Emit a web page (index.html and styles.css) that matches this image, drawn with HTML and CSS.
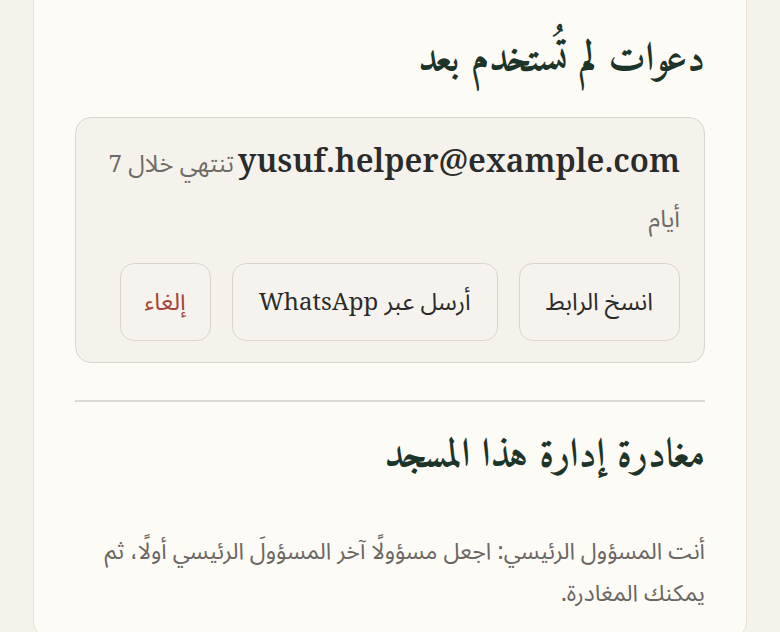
FILE: index.html
```html
<!DOCTYPE html>
<html lang="ar" dir="rtl">
<head>
<meta charset="utf-8">
<link rel="stylesheet" href="styles.css">
</head>
<body>
<div class="card">
  <h2 class="title">دعوات لم تُستخدم بعد</h2>
  <div class="invite">
    <div class="invite-info">
      <span class="email">yusuf.helper@example.com</span>
      <span class="expiry">تنتهي خلال 7 أيام</span>
    </div>
    <div class="actions">
      <button class="btn">انسخ الرابط</button>
      <button class="btn">أرسل عبر WhatsApp</button>
      <button class="btn danger">إلغاء</button>
    </div>
  </div>
  <hr class="divider">
  <h2 class="title leave">مغادرة إدارة هذا المسجد</h2>
  <p class="note">أنت المسؤول الرئيسي: اجعل مسؤولًا آخر المسؤولَ الرئيسي أولًا، ثم يمكنك المغادرة.</p>
</div>
</body>
</html>
```
FILE: styles.css
```css
html, body {
  margin: 0;
  padding: 0;
  height: 100%;
  overflow: hidden;
}
body {
  background: #f5f1eb;
  font-family: "Noto Serif", "Noto Sans Arabic", serif;
  color: #2a2a2a;
}
.card {
  margin: -30px 33px 0 33px;
  background: #fdfbf6;
  border: 1px solid #ebe4cb;
  border-radius: 16px;
  padding: 62px 41px 24px 41px;
}
.title {
  font-family: "Amiri", serif;
  font-weight: 700;
  font-size: 40px;
  line-height: 54px;
  color: #1d3529;
  margin: 0 0 30px 0;
}
.invite {
  background: #f5f2ec;
  border: 1.5px solid #dcd8d0;
  border-radius: 16px;
  padding: 16px 24px 21px 24px;
}
.invite-info {
  line-height: 51px;
}
.email {
  font-size: 32px;
  font-weight: 600;
  color: #2b2b2b;
}
.expiry {
  font-size: 24px;
  color: #6e6a66;
}
.actions {
  display: flex;
  flex-wrap: wrap;
  gap: 21px;
  margin-top: 16px;
}
.btn {
  font-family: "Noto Serif", "Noto Sans Arabic", serif;
  font-size: 24px;
  color: #2b2b2b;
  height: 78px;
  padding: 0 26px;
  background: #f6f3ee;
  border: 1.5px solid #d9d5cd;
  border-radius: 14px;
}
.btn.danger {
  color: #a54536;
  padding: 0 24px;
}
.divider {
  border: 0;
  height: 2px;
  background: #dedad3;
  margin: 37px 0 27px 0;
}
.leave {
  margin-bottom: 46px;
}
.note {
  margin: 0;
  font-size: 23px;
  line-height: 42px;
  color: #6a6662;
}
```
